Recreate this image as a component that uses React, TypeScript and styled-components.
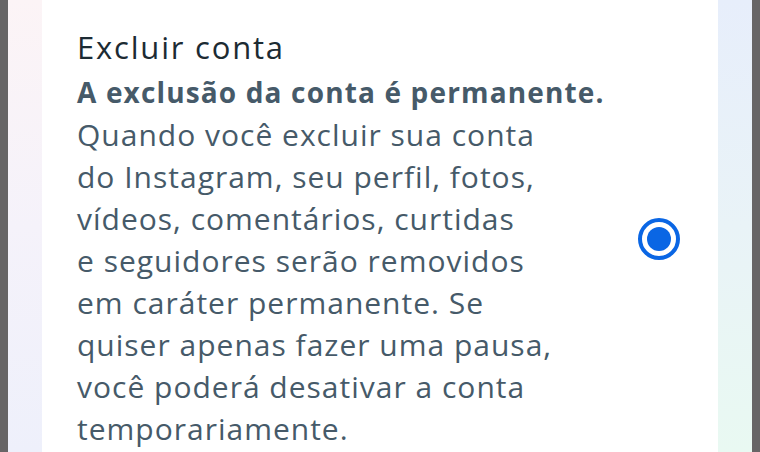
import React, { useState } from 'react';
import styled, { createGlobalStyle } from 'styled-components';

const bodyLines = [
  'Quando você excluir sua conta',
  'do Instagram, seu perfil, fotos,',
  'vídeos, comentários, curtidas',
  'e seguidores serão removidos',
  'em caráter permanente. Se',
  'quiser apenas fazer uma pausa,',
  'você poderá desativar a conta',
  'temporariamente.',
];

const App: React.FC = () => {
  const [selected, setSelected] = useState(true);

  return (
    <>
      <GlobalStyle />
      <Screen>
        <Bezel />
        <Glow side="left" />
        <Card>
          <TextBlock>
            <Title>Excluir conta</Title>
            <Lead>A exclusão da conta é permanente.</Lead>
            <Body>
              {bodyLines.map((line) => (
                <Line key={line}>{line}</Line>
              ))}
            </Body>
          </TextBlock>
          <Radio
            type="button"
            aria-pressed={selected}
            onClick={() => setSelected(!selected)}
            checked={selected}
          >
            <Dot checked={selected} />
          </Radio>
        </Card>
        <Glow side="right" />
        <Bezel />
      </Screen>
    </>
  );
};

export default App;

const GlobalStyle = createGlobalStyle`
  html, body {
    margin: 0;
    padding: 0;
    background: #fff;
  }
  body {
    font-family: "Open Sans", "Noto Sans", sans-serif;
  }
`;

const Screen = styled.div`
  display: flex;
  width: 760px;
  height: 452px;
  overflow: hidden;
`;

const Bezel = styled.div`
  width: 8px;
  flex-shrink: 0;
  background: #676566;
`;

const Glow = styled.div<{ side: 'left' | 'right' }>`
  width: 34px;
  flex-shrink: 0;
  background: ${(p) =>
    p.side === 'left'
      ? 'linear-gradient(180deg, #fcf4f6 0%, #f5f2fa 50%, #eef0fb 100%)'
      : 'linear-gradient(180deg, #e7eefb 0%, #e9f3f7 50%, #e9f9f2 100%)'};
`;

const Card = styled.div`
  flex: 1;
  display: flex;
  align-items: flex-start;
  justify-content: space-between;
  padding: 0 38px 0 35px;
  background: #fff;
`;

const TextBlock = styled.div`
  display: flex;
  flex-direction: column;
  padding-top: 24px;
`;

const Title = styled.h1`
  margin: 0;
  font-size: 31px;
  font-weight: 400;
  line-height: 46px;
  letter-spacing: 1.8px;
  color: #1c2b33;
`;

const Lead = styled.p`
  margin: 0;
  font-size: 28px;
  font-weight: 700;
  line-height: 44px;
  letter-spacing: 1.15px;
  color: #465a69;
`;

const Body = styled.p`
  margin: 0;
  font-size: 30px;
  font-weight: 400;
  line-height: 42px;
  letter-spacing: 1px;
  color: #465a69;
`;

const Line = styled.span`
  display: block;
  white-space: nowrap;
`;

const Radio = styled.button<{ checked: boolean }>`
  width: 42px;
  height: 42px;
  flex-shrink: 0;
  margin-top: 218px;
  padding: 0;
  border-radius: 50%;
  border: 4px solid ${(p) => (p.checked ? '#0a66e4' : '#8a9aa5')};
  background: #fff;
  display: flex;
  align-items: center;
  justify-content: center;
  cursor: pointer;
`;

const Dot = styled.span<{ checked: boolean }>`
  width: 24px;
  height: 24px;
  border-radius: 50%;
  background: ${(p) => (p.checked ? '#0a66e4' : 'transparent')};
`;
